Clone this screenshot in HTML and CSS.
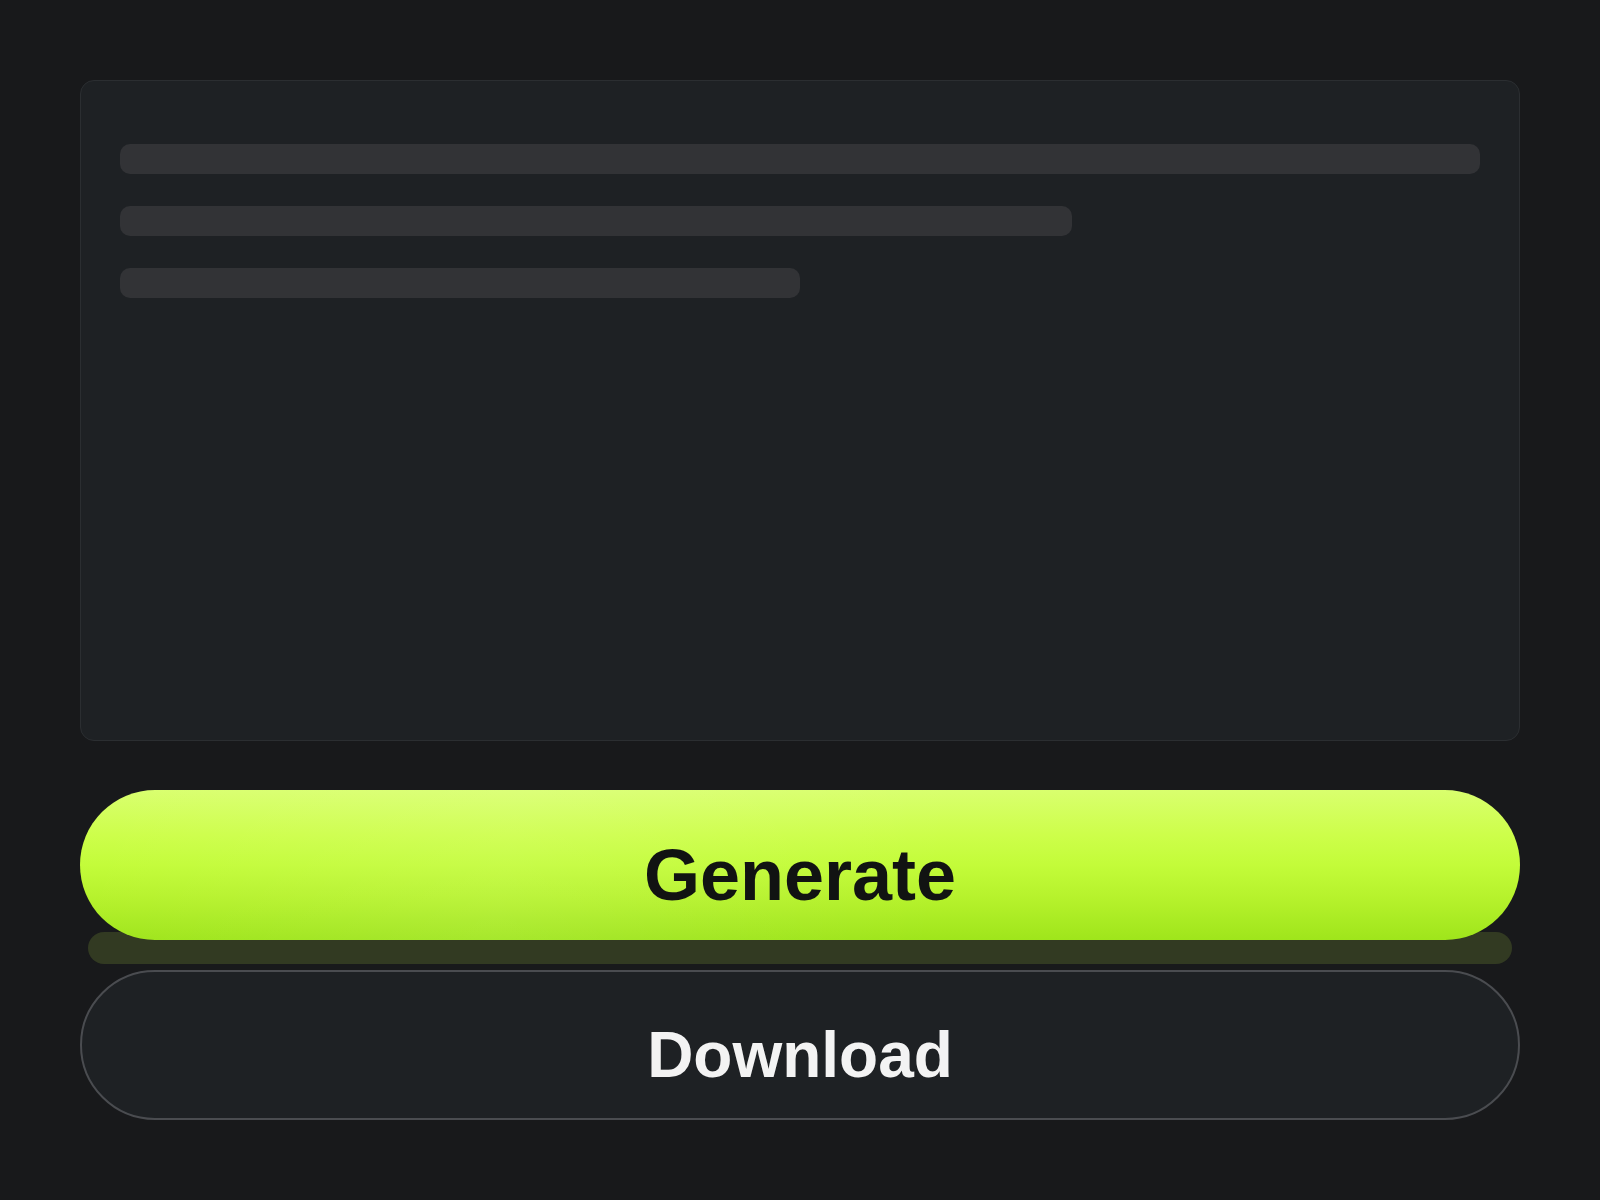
FILE: index.html
```html
<!DOCTYPE html>
<html lang="en">
<head>
<meta charset="utf-8">
<title>Generate</title>
<link rel="stylesheet" href="styles.css">
</head>
<body>
<main class="page">
  <section class="card">
    <div class="line line-full"></div>
    <div class="line line-70"></div>
    <div class="line line-50"></div>
  </section>
  <div class="actions">
    <button class="btn btn-primary">Generate</button>
    <div class="btn-shadow"></div>
    <button class="btn btn-secondary">Download</button>
  </div>
</main>
</body>
</html>
```

FILE: styles.css
```css
* { box-sizing: border-box; }
html, body {
  margin: 0;
  padding: 0;
  background: #18191b;
}
body {
  font-family: "Liberation Sans", Arial, sans-serif;
}
.page {
  padding: 80px;
  display: flex;
  flex-direction: column;
}
.card {
  height: 661px;
  background: #1e2124;
  border: 1px solid #2b2e31;
  border-radius: 14px;
  padding: 63px 39px;
  display: flex;
  flex-direction: column;
  gap: 32px;
}
.line {
  height: 30px;
  border-radius: 10px;
  background: #323336;
}
.line-full { width: 100%; }
.line-70 { width: 70%; }
.line-50 { width: 50%; }
.actions {
  margin-top: 49px;
  display: flex;
  flex-direction: column;
}
.btn {
  height: 150px;
  border-radius: 75px;
  width: 100%;
  display: flex;
  align-items: center;
  justify-content: center;
  padding: 20px 0 0;
  font-family: "Liberation Sans", Arial, sans-serif;
  font-weight: 700;
  line-height: 1;
  margin: 0;
}
.btn-primary {
  position: relative;
  z-index: 1;
  border: none;
  color: #111312;
  font-size: 72px;
  background:
    linear-gradient(100deg, rgba(255,255,255,0) 0%, rgba(255,255,255,0.08) 30%, rgba(255,255,255,0) 60%),
    linear-gradient(180deg, #d9ff6e 0%, #cdfe4a 30%, #c3fc39 50%, #b6f22c 72%, #9fe51b 100%);
}
.btn-shadow {
  height: 32px;
  margin: -8px 8px 0;
  border-radius: 16px;
  background: #323a22;
}
.btn-secondary {
  margin-top: 6px;
  background: #1e2124;
  border: 2px solid #4a4c50;
  color: #f3f3f3;
  font-size: 64px;
}
```
